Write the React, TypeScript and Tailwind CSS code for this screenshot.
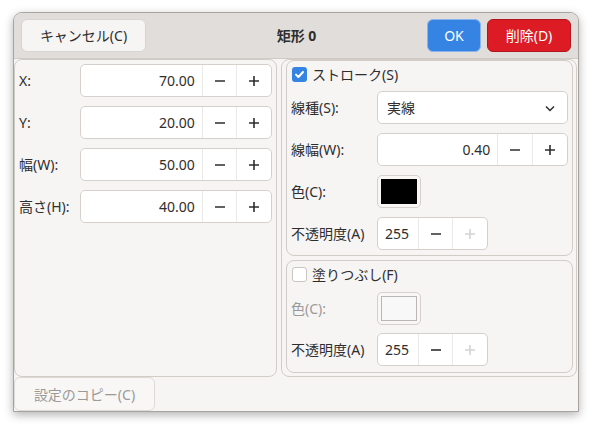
const font = { fontFamily: '"Noto Sans", "Noto Sans CJK JP", sans-serif' }

const Spin = ({ value, w, textW, plusOff }: { value: string; w: string; textW: string; plusOff?: boolean }) => (
  <div className={`flex h-[33px] ${w} rounded-[5px] border border-[#d5d0cb] bg-white text-[14px] text-[#2e2e2e]`}>
    <div className={`flex ${textW} items-center ${plusOff ? 'justify-start pl-[7px]' : 'justify-end pr-[7px]'}`}>{value}</div>
    <div className="flex w-[35px] items-center justify-center border-l border-[#ebe9e6]">
      <svg width="12" height="12" viewBox="0 0 12 12"><path d="M1 6h10" stroke="#2e2e2e" strokeWidth="1.6" /></svg>
    </div>
    <div className="flex w-[35px] items-center justify-center border-l border-[#ebe9e6]">
      <svg width="12" height="12" viewBox="0 0 12 12">
        <path d="M1 6h10M6 1v10" stroke={plusOff ? '#d6d4d2' : '#2e2e2e'} strokeWidth="1.6" />
      </svg>
    </div>
  </div>
)

const Row = ({ label, children, dim }: { label: string; children: React.ReactNode; dim?: boolean }) => (
  <div className="flex h-[33px] items-center">
    <div className={`w-[86px] text-[14px] ${dim ? 'text-[#9b9a98]' : 'text-[#2e2e2e]'}`}>{label}</div>
    {children}
  </div>
)

const Check = ({ on, label }: { on?: boolean; label: string }) => (
  <div className="flex h-[16px] items-center gap-[5px] pl-[1px] text-[14px] text-[#2e2e2e]">
    {on ? (
      <div className="flex h-[15px] w-[15px] items-center justify-center rounded-[3px] bg-[#3584e4]">
        <svg width="11" height="11" viewBox="0 0 11 11"><path d="M2 5.6l2.4 2.4L9 3" stroke="white" strokeWidth="2" fill="none" strokeLinecap="round" strokeLinejoin="round" /></svg>
      </div>
    ) : (
      <div className="h-[15px] w-[15px] rounded-[3px] border border-[#c9c5c1] bg-white" />
    )}
    <span>{label}</span>
  </div>
)

const Swatch = ({ black }: { black?: boolean }) => (
  <div className="flex h-[33px] w-[44px] items-center justify-center rounded-[5px] border border-[#d5d0cb] bg-[#f8f7f6]">
    <div className={`h-[25px] w-[36px] ${black ? 'bg-black' : 'border border-[#b9b6b3] bg-[#f8f8f8]'}`} />
  </div>
)

const App = () => {
  const left = [
    ['X:', '70.00'],
    ['Y:', '20.00'],
    ['幅(W):', '50.00'],
    ['高さ(H):', '40.00'],
  ]

  return (
    <div className="h-[428px] w-[592px] bg-white pl-[13px] pt-[12px]" style={font}>
      <div className="flex h-[400px] w-[566px] flex-col overflow-hidden rounded-t-[9px] border border-[#a8a39e] bg-[#f6f5f4] shadow-[0_3px_10px_rgba(0,0,0,0.3)]">
        <div className="flex h-[46px] shrink-0 items-center border-b border-[#cfcac5] bg-[#e0ddda] px-[7px] pb-[1px]">
          <button className="h-[33px] w-[125px] rounded-[6px] border border-[#d8d4d0] bg-[#f6f5f4] text-[14px] text-[#2e2e2e]">
            キャンセル(C)
          </button>
          <div className="flex-1 pl-[20px] text-center text-[14px] font-bold text-[#2e2e2e]">矩形 0</div>
          <button className="h-[33px] w-[54px] rounded-[6px] border border-[#8ab4ec] bg-[#3584e4] text-[14px] text-white">OK</button>
          <button className="ml-[6px] h-[33px] w-[84px] rounded-[6px] border border-[#b3151c] bg-[#dc1b24] text-[14px] text-white">
            削除(D)
          </button>
        </div>

        <div className="flex h-[318px] shrink-0 gap-[4px]">
          <div className="flex w-[263px] flex-col gap-[9px] rounded-[8px] border border-[#d2ccc7] px-[4px] pt-[4px]">
            {left.map(([l, v]) => (
              <div key={l} className="flex h-[33px] items-center">
                <div className="w-[61px] text-[14px] text-[#2e2e2e]">{l}</div>
                <Spin value={v} w="w-[192px]" textW="w-[122px]" />
              </div>
            ))}
          </div>

          <div className="flex w-[296px] flex-col gap-[4px] rounded-[8px] border border-[#d2ccc7] pb-[3px] pl-[4px] pr-[3px]">
            <div className="flex h-[196px] flex-col rounded-[8px] border border-[#d2ccc7] pl-[4px] pr-[4px] pt-[5px]">
              <Check on label="ストローク(S)" />
              <div className="mt-[9px] flex flex-col gap-[9px]">
                <Row label="線種(S):">
                  <div className="flex h-[33px] w-[191px] items-center justify-between rounded-[5px] border border-[#d5d0cb] bg-white pl-[9px] pr-[11px] text-[14px] text-[#2e2e2e]">
                    <span>実線</span>
                    <svg width="12" height="12" viewBox="0 0 12 12"><path d="M2 4.5l4 4 4-4" stroke="#2e2e2e" strokeWidth="1.5" fill="none" /></svg>
                  </div>
                </Row>
                <Row label="線幅(W):">
                  <Spin value="0.40" w="w-[191px]" textW="w-[120px]" />
                </Row>
                <Row label="色(C):">
                  <Swatch black />
                </Row>
                <Row label="不透明度(A)">
                  <Spin value="255" w="w-[111px]" textW="w-[40px]" plusOff />
                </Row>
              </div>
            </div>

            <div className="flex h-[113px] flex-col rounded-[8px] border border-[#d2ccc7] pl-[4px] pr-[4px] pt-[5px]">
              <Check label="塗りつぶし(F)" />
              <div className="mt-[10px] flex flex-col gap-[8px]">
                <Row label="色(C):" dim>
                  <Swatch />
                </Row>
                <Row label="不透明度(A)">
                  <Spin value="255" w="w-[111px]" textW="w-[40px]" plusOff />
                </Row>
              </div>
            </div>
          </div>
        </div>

        <div className="flex h-[34px] shrink-0">
          <button className="h-[34px] w-[141px] rounded-[6px] border border-[#dedad6] bg-[#f8f7f6] text-[14px] text-[#9b9a98]">
            設定のコピー(C)
          </button>
        </div>
      </div>
    </div>
  )
}

export default App
